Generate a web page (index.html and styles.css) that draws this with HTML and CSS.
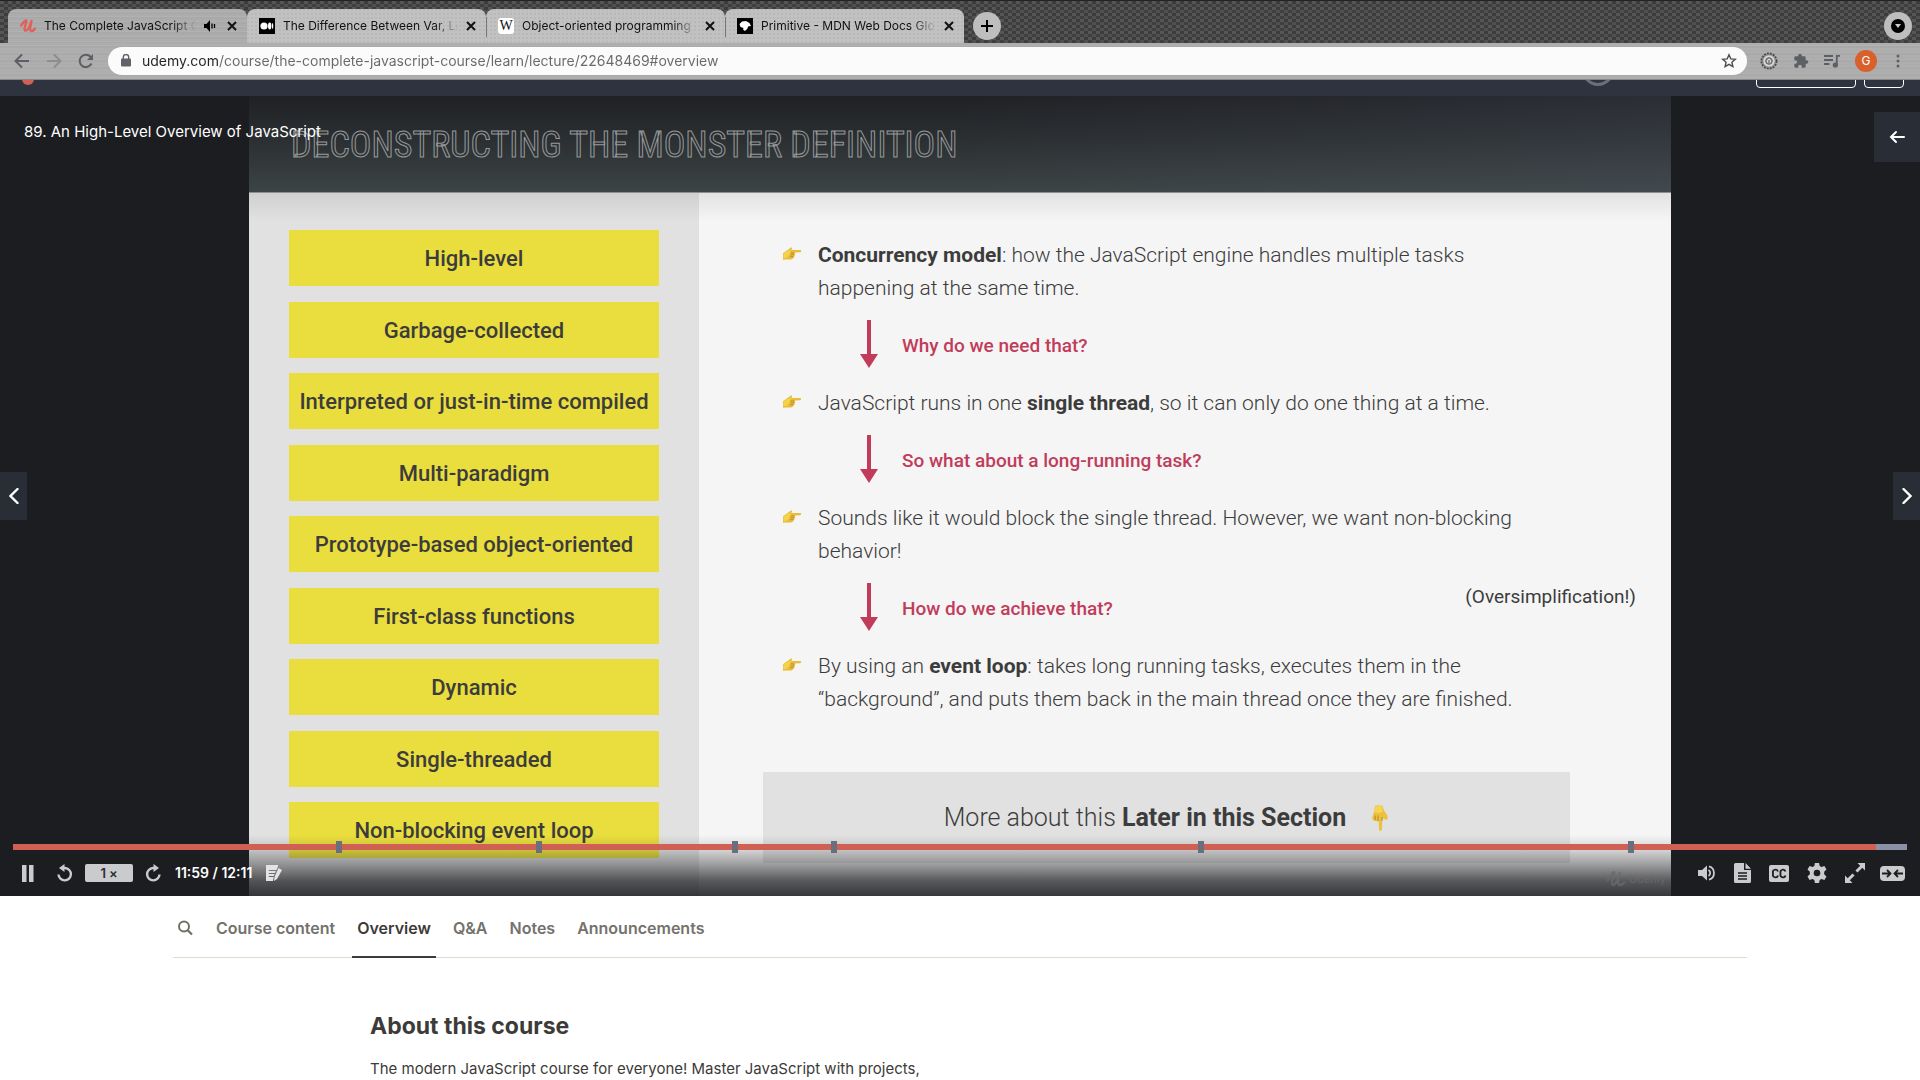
FILE: index.html
```html
<!DOCTYPE html>
<html lang="en">
<head>
<meta charset="utf-8">
<title>The Complete JavaScript Course</title>
<link rel="stylesheet" href="styles.css">
</head>
<body>
<div class="browser">
  <div class="tabstrip">
    <div class="tab tab-active">
      <svg class="favicon" viewBox="0 0 16 16"><path d="M1 7.500C3 5 4.500 2.500 6 2.500c1.500 0-1.500 6-1.500 8.500s2.500 2 4-.5C10 8 11 4.500 11.500 3c-.5 3-2.500 9-.5 10 1.500.5 3-1 4-2.500" fill="none" stroke="#e0615a" stroke-width="2.400" stroke-linecap="round" stroke-linejoin="round"/></svg>
      <span class="tab-title">The Complete JavaScript C</span>
      <svg class="tab-sound" viewBox="0 0 12 12"><path d="M0 4h2.500L6 0v12L2.500 8H0z" fill="#000"/><path d="M8 3.500v5M10.500 4v4" stroke="#000" stroke-width="1.300"/></svg>
      <button class="tab-close" aria-label="Close tab"><svg viewBox="0 0 10 10"><path d="M1 1l8 8M9 1L1 9"/></svg></button>
    </div>
    <div class="tab">
      <svg class="favicon" viewBox="0 0 16 16"><path d="M0 0h16v16H0z"/><circle cx="5" cy="8" r="3.600" fill="#fff"/><ellipse cx="10.700" cy="8" rx="1.700" ry="3.400" fill="#fff"/><ellipse cx="13.600" cy="8" rx=".7" ry="3" fill="#fff"/></svg>
      <span class="tab-title">The Difference Between Var, Le</span>
      <button class="tab-close" aria-label="Close tab"><svg viewBox="0 0 10 10"><path d="M1 1l8 8M9 1L1 9"/></svg></button>
    </div>
    <div class="tab tab-split">
      <span class="favicon favicon-w">W</span>
      <span class="tab-title">Object-oriented programming -</span>
      <button class="tab-close" aria-label="Close tab"><svg viewBox="0 0 10 10"><path d="M1 1l8 8M9 1L1 9"/></svg></button>
    </div>
    <div class="tab tab-split">
      <svg class="favicon" viewBox="0 0 16 16"><path d="M0 0h16v16H0z"/><path d="M2.500 6L5 3.500l4-.5 3.500 2L14 8l-3 .5-.5 2L8 13l-2-1.500.5-1.500-3-1z" fill="#fff"/></svg>
      <span class="tab-title">Primitive - MDN Web Docs Glo</span>
      <button class="tab-close" aria-label="Close tab"><svg viewBox="0 0 10 10"><path d="M1 1l8 8M9 1L1 9"/></svg></button>
    </div>
    <button class="round-btn new-tab" aria-label="New tab"><svg width="14" height="14" viewBox="0 0 14 14"><path d="M7 1v12M1 7h12" stroke="#000" stroke-width="2"/></svg></button>
    <button class="round-btn tab-search" aria-label="Search tabs"><svg width="14" height="14" viewBox="0 0 14 14"><circle cx="7" cy="7" r="7"/><path d="M4 5h6L7 9z" fill="#ccc"/></svg></button>
  </div>
  <div class="toolbar">
    <div class="nav-btns">
      <button aria-label="Back"><svg width="16" height="16" viewBox="0 0 16 16"><path d="M15 8H2M8 1.500L1.500 8 8 14.500" fill="none" stroke="#5c5f63" stroke-width="2"/></svg></button>
      <button aria-label="Forward"><svg width="16" height="16" viewBox="0 0 16 16"><path d="M1 8h13M8 1.500L14.500 8 8 14.500" fill="none" stroke="#8b8d90" stroke-width="2"/></svg></button>
      <button aria-label="Reload"><svg width="16" height="16" viewBox="0 0 16 16"><path d="M13.500 10.500A6.200 6.200 0 1 1 12.500 3.700L14 5.200" fill="none" stroke="#5c5f63" stroke-width="2"/><path d="M15 1v6H9z" fill="#5c5f63"/></svg></button>
    </div>
    <div class="omnibox">
      <svg width="10" height="13" viewBox="0 0 10 13"><rect y="4.500" width="10" height="8" rx="1" fill="#5f6368"/><path d="M2.300 5V3a2.700 2.500 0 0 1 5.400 0v2" fill="none" stroke="#5f6368" stroke-width="1.400"/></svg>
      <input class="url" type="text" aria-label="Address" value="udemy.com/course/the-complete-javascript-course/learn/lecture/22648469#overview">
      <button aria-label="Bookmark"><svg width="16" height="16" viewBox="0 0 16 16"><path d="M8 1.800l1.800 4.100 4.500.4-3.400 2.900 1 4.400L8 11.300l-3.900 2.300 1-4.400L1.700 6.300l4.500-.4z" fill="none" stroke="#4b4e52" stroke-width="1.400"/></svg></button>
    </div>
    <div class="ext-btns">
      <button aria-label="Extension"><svg width="18" height="18" viewBox="0 0 18 18"><circle cx="9" cy="9" r="7.500" fill="none" stroke="#4c4c4c" stroke-width="2" stroke-dasharray="2 1"/><circle cx="9" cy="9" r="6.300" fill="#d4d4d4" stroke="#777"/><circle cx="9" cy="9" r="3.300" fill="#8d8d8d" stroke="#666"/><path d="M7.500 10.500V8.800a1.500 1.500 0 0 1 3 0v1.700" fill="none" stroke="#ddd"/></svg></button>
      <button aria-label="Extensions"><svg width="16" height="16" viewBox="0 0 24 24"><path d="M20.500 11H19V7a2 2 0 0 0-2-2h-4V3.500a2.500 2.500 0 0 0-5 0V5H4a2 2 0 0 0-2 2v3.800h1.500a2.700 2.700 0 0 1 0 5.400H2V20a2 2 0 0 0 2 2h3.800v-1.500a2.700 2.700 0 0 1 5.400 0V22H17a2 2 0 0 0 2-2v-4h1.500a2.500 2.500 0 0 0 0-5z" fill="#5c5f63"/></svg></button>
      <button aria-label="Media"><svg width="16" height="14" viewBox="0 0 16 14"><path d="M0 2h9M0 6h9M0 10h5.500M12.800 12V1.800H16" fill="none" stroke="#5c5f63" stroke-width="1.800"/><circle cx="11.300" cy="11" r="2.600" fill="#5c5f63"/></svg></button>
      <button class="avatar" aria-label="Profile">G</button>
      <button aria-label="Menu"><svg width="4" height="14" viewBox="0 0 4 14" fill="#5c5f63"><circle cx="2" cy="2" r="1.500"/><circle cx="2" cy="7" r="1.500"/><circle cx="2" cy="12" r="1.500"/></svg></button>
    </div>
  </div>
</div>

<header class="course-bar">
  <span class="brand-dot"></span>
  <span class="progress-ring"></span>
  <button class="bar-btn bar-btn-wide" aria-label="Share"></button>
  <button class="bar-btn" aria-label="More options"></button>
</header>

<main>
<section class="player">
  <div class="slide">
    <div class="slide-head"><h2>DECONSTRUCTING THE MONSTER DEFINITION</h2></div>
    <div class="slide-body">
      <ul class="traits">
        <li>High-level</li>
        <li>Garbage-collected</li>
        <li>Interpreted or just-in-time compiled</li>
        <li>Multi-paradigm</li>
        <li>Prototype-based object-oriented</li>
        <li>First-class functions</li>
        <li>Dynamic</li>
        <li>Single-threaded</li>
        <li>Non-blocking event loop</li>
      </ul>
      <div class="explain">
        <svg class="defs" width="0" height="0">
          <symbol id="hand" viewBox="0 0 20 18" preserveAspectRatio="none"><path d="M1 8c1.500-2 4-3.500 6-5.500C8 1 9.500 0 10 1c.4 1-.4 2-.8 3H18c1.600 0 1.600 2.600 0 2.700l-5.500.3c.9.600.9 2 0 2.500.7.900.5 2-.4 2.500.4 1-.1 2-1.100 2.300.1 1-.7 1.700-2 1.700H4c-1.500 0-3 .5-3 .5z" fill="#e9bd3c"/><path d="M1.500 8.500C3 6.500 6 5 8 3.500L9 6c-1 2-2 6-5 8l-2.500.5z" fill="#f3d24c"/><path d="M8.500 7.500l4 .1M8.500 10l3.800-.2M8 12.500l3.500-.2" stroke="#b47f1c" stroke-width=".8"/></symbol>
          <symbol id="down" viewBox="0 0 18 48"><path d="M7 0h4v34h7L9 48 0 34h7z" fill="#c13c5b"/></symbol>
        </svg>
        <div class="point"><svg class="hand"><use href="#hand"/></svg><p><b>Concurrency model</b>: how the JavaScript engine handles multiple tasks<br>happening at the same time.</p></div>
        <div class="why"><svg class="down"><use href="#down"/></svg><p>Why do we need that?</p></div>
        <div class="point"><svg class="hand"><use href="#hand"/></svg><p>JavaScript runs in one <b>single thread</b>, so it can only do one thing at a time.</p></div>
        <div class="why"><svg class="down"><use href="#down"/></svg><p>So what about a long-running task?</p></div>
        <div class="point"><svg class="hand"><use href="#hand"/></svg><p>Sounds like it would block the single thread. However, we want non-blocking<br>behavior!</p></div>
        <div class="why"><svg class="down"><use href="#down"/></svg><p>How do we achieve that?</p><p class="aside">(Oversimplification!)</p></div>
        <div class="point"><svg class="hand"><use href="#hand"/></svg><p>By using an <b>event loop</b>: takes long running tasks, executes them in the<br>“background”, and puts them back in the main thread once they are finished.</p></div>
        <div class="later"><p>More about this <b>Later in this Section</b></p><svg width="18" height="26" viewBox="0 0 18 26"><path d="M4 .8C6 0 9 0 11.500.8c.4 3 1.500 5 4 8.200 1.500 2 1.500 5 .3 5.700-1 .500-2-.1-2.800-1l-1.800-.5-.2 11c-.2 2-2.800 2-3 0l-.3-8.500c-.8 1-2.300 1-2.800 0-.9.600-2.100.2-2.400-.8C1.500 14.500 1 14 1.200 12.500L3 7z" fill="#ecc13f"/><path d="M4.500 1.500c2-1 4.500-.8 6.500-.2l.5 5.700c-2.500 1-5 1-8 0z" fill="#f5d652"/><path d="M4.200 10.500v4.500M7 10.500v5.500M11 12v4" stroke="#b47f1c" stroke-width=".9"/></svg></div>
      </div>
    </div>
  </div>

  <p class="lecture-title">89. An High-Level Overview of JavaScript</p>
  <button class="panel-btn" aria-label="Open course content"><svg width="16" height="14" viewBox="0 0 16 14"><path d="M15 7H2M7 2L2 7l5 5" fill="none" stroke="#fff" stroke-width="2" stroke-linecap="round"/></svg></button>
  <button class="side-btn side-prev" aria-label="Previous"><svg width="10" height="16" viewBox="0 0 10 16"><path d="M8.500 1L1.500 8l7 7" fill="none" stroke="#fff" stroke-width="2.400" stroke-linecap="round"/></svg></button>
  <button class="side-btn side-next" aria-label="Next"><svg width="10" height="16" viewBox="0 0 10 16"><path d="M1.500 1l7 7-7 7" fill="none" stroke="#fff" stroke-width="2.400" stroke-linecap="round"/></svg></button>

  <div class="controls">
    <div class="seek">
      <input type="range" min="0" max="731" value="719" aria-label="Seek">
      <i style="left:17.05%"></i><i style="left:27.61%"></i><i style="left:37.96%"></i><i style="left:43.19%"></i><i style="left:62.57%"></i><i style="left:85.27%"></i>
    </div>
    <div class="buttons">
      <button class="c-pause" aria-label="Pause"><svg width="12" height="17" viewBox="0 0 12 17"><path d="M0 0h4.500v17H0zM7 0h4.500v17H7z"/></svg></button>
      <button class="c-back" aria-label="Rewind 5s"><svg width="16" height="18" viewBox="0 0 16 18"><path d="M5 4h3a6.200 6.200 0 1 1-6.500 6.500" fill="none" stroke="#cacbcd" stroke-width="2.400"/><path d="M7.500 0v8L2 4z"/></svg></button>
      <button class="c-rate">1<small>×</small></button>
      <button class="c-fwd" aria-label="Forward 5s"><svg width="16" height="18" viewBox="0 0 16 18"><path d="M11 4H8a6.200 6.200 0 1 0 6.500 6.500" fill="none" stroke="#cacbcd" stroke-width="2.400"/><path d="M8.500 0v8L14 4z"/></svg></button>
      <span class="c-time">11:59 / 12:11</span>
      <button class="c-note" aria-label="Add note"><svg width="16" height="16" viewBox="0 0 16 16"><path d="M0 0h12v1.500L10.500 5H2.800v1h7L9 8H2.800v1h5.700L8 11H2.800v1h5L7 16H0z" fill="#e3e3e3"/><path d="M12.500 3l3.500 2-5 9-3 2 .5-4z" fill="#e3e3e3"/></svg></button>
      <span class="watermark"><svg width="20" height="18" viewBox="0 0 20 18"><path d="M1 11C4 8 6 2 8 2c2 0-3 8-2 12 2 4 7-5 8-12-1 5-3 11-1 13 2 1 4-1 6-3" fill="none" stroke="#6b6b6e" stroke-width="2"/></svg>Udemy</span>
      <div class="right-group">
      <button aria-label="Volume"><svg width="18" height="18" viewBox="0 0 18 18"><path d="M0 6h4l5-4.500v15L4 12H0z"/><path d="M10.500 6a3.500 3.500 0 0 1 0 6M11 2.300a7 7 0 0 1 0 13.400" fill="none" stroke="#cacbcd" stroke-width="1.800"/></svg></button>
      <button aria-label="Transcript"><svg width="17" height="20" viewBox="0 0 17 20"><path d="M1.500 0H10v7h7v11.500a1.500 1.500 0 0 1-1.500 1.500h-14A1.500 1.500 0 0 1 0 18.500v-17A1.500 1.500 0 0 1 1.500 0zM11.500 0L17 5.700h-5.500z"/><path d="M4 10h9M4 13h9M4 16h9" stroke="#1c1d1f" stroke-width="1.400"/></svg></button>
      <button aria-label="Captions"><svg width="20" height="17" viewBox="0 0 20 17"><rect width="20" height="17" rx="2"/><path d="M9 6.500A2.600 2.600 0 0 0 4 8v1a2.600 2.600 0 0 0 5 1.500M16.500 6.500A2.600 2.600 0 0 0 11.500 8v1a2.600 2.600 0 0 0 5 1.500" fill="none" stroke="#1c1d1f" stroke-width="1.800"/></svg></button>
      <button aria-label="Settings"><svg width="20" height="20" viewBox="0 0 24 24"><path d="M9.500 0h5l.7 3.600 2.200 1.200 3.500-1.200 2.500 4.300-2.800 2.500v3.200l2.800 2.500-2.500 4.300-3.500-1.200-2.200 1.200-.7 3.600h-5l-.7-3.600-2.200-1.200-3.500 1.200L.6 16.100l2.800-2.500v-3.200L.6 7.900l2.500-4.300 3.500 1.200 2.200-1.200zM12 8a4 4 0 1 0 0 8 4 4 0 0 0 0-8z" fill-rule="evenodd"/></svg></button>
      <button aria-label="Fullscreen"><svg width="20" height="20" viewBox="0 0 20 20"><path d="M12.500 0H20v7.500l-2.700-2.700-4.800 4.800-2.100-2.100 4.800-4.800zM0 20v-7.500l2.700 2.700 4.800-4.800 2.100 2.100-4.800 4.800L7.500 20z"/></svg></button>
      <button class="c-theatre" aria-label="Theatre mode"><svg width="25" height="15" viewBox="0 0 25 15"><rect width="25" height="15" rx="4"/><path d="M2 7.500h8M7 4l3.500 3.500L7 11M23 7.500h-8M18 4l-3.500 3.500L18 11" fill="none" stroke="#1c1d1f" stroke-width="1.800"/></svg></button>
      </div>
    </div>
  </div>
</section>

<nav class="tabs">
  <a href="#search" aria-label="Search"><svg width="15" height="16" viewBox="0 0 15 16"><circle cx="6" cy="6.500" r="5" fill="none" stroke="#6f6f66" stroke-width="2"/><path d="M9.500 10l4.500 4.500" stroke="#6f6f66" stroke-width="2.200"/></svg></a>
  <a href="#content">Course content</a>
  <a href="#overview" class="current">Overview</a>
  <a href="#qa">Q&amp;A</a>
  <a href="#notes">Notes</a>
  <a href="#announcements">Announcements</a>
</nav>
<section class="about">
  <h1>About this course</h1>
  <p>The modern JavaScript course for everyone! Master JavaScript with projects,</p>
</section>
</main>
</body>
</html>
```

FILE: styles.css
```css
* { box-sizing: border-box; }
html { overflow: hidden; }
body { margin: 0; background: #fff; color: #3c3b37; font: 16px/20px Inter, "Open Sans", sans-serif; }
h1, h2, p, ul { margin: 0; padding: 0; }
button { border: 0; padding: 0; background: none; display: flex; align-items: center; justify-content: center; font-family: inherit; }
svg { display: block; flex: none; }

/* Browser chrome */
.tabstrip {
  display: flex; align-items: flex-end; height: 43px; padding-left: 8px;
  border-top: 1px solid #222;
  background: conic-gradient(#3c3c3c 25%, #505050 0 50%, #3f3f3f 0 75%, #565656 0) 0 0 / 8px 6px;
}
.tab {
  position: relative; display: flex; align-items: center; flex: 0 1 239px; min-width: 0; height: 34px; padding: 0 10px 0 12px;
  border-radius: 8px 8px 0 0; color: #111; font-size: 12px; line-height: 16px;
  background: radial-gradient(circle at 1px 1px, #b8b8b8 1px, transparent 1px) 0 0 / 4px 4px, #c1c1c1;
}
.tab-active { background: repeating-linear-gradient(#acacac 0 2px, #b1b1b1 2px 3px, #a9a9a9 3px 5px); }
.tab-split::before { content: ""; position: absolute; left: 0; top: 8px; width: 1px; height: 20px; background: #777; }
.favicon { width: 16px; height: 16px; flex: none; }
.favicon-w { border-radius: 3px; background: #fff; font: 14px/16px "Liberation Serif", serif; text-align: center; }
.tab-title {
  flex: 1; min-width: 0; margin: 0 8px; overflow: hidden; white-space: nowrap;
  mask-image: linear-gradient(to left, transparent, #000 24px);
}
.tab-sound { width: 12px; height: 12px; margin-right: 11px; }
.tab-close { width: 10px; height: 10px; }
.tab-close svg { width: 10px; height: 10px; stroke: #111; stroke-width: 2; }
.round-btn { width: 28px; height: 28px; border-radius: 50%; background: #bebebe; margin-bottom: 3px; }
.new-tab { margin-left: 9px; }
.tab-search { margin-left: auto; margin-right: 8px; }
.toolbar {
  display: flex; align-items: center; height: 37px; padding: 0 16px 1px 14px; border-bottom: 1px solid #888;
  background: repeating-linear-gradient(#adadad 0 2px, #b1b1b1 2px 3px, #a9a9a9 3px 5px, #aeaeae 5px 7px);
}
.nav-btns { display: flex; gap: 16px; margin-right: 14px; }
.omnibox { flex: 1; display: flex; align-items: center; height: 28px; padding: 0 10px 0 13px; border-radius: 14px; background: #fbfbfb; }
.url {
  flex: 1; min-width: 0; margin-left: 11px; padding: 0; border: 0; outline: 0; font: 14px/20px Inter, sans-serif;
  color: transparent; background: linear-gradient(to right, #222 76px, #66686b 76px); -webkit-background-clip: text; background-clip: text;
}
.nav-btns button { width: 16px; }
.ext-btns { display: flex; align-items: center; gap: 15px; margin-left: 13px; }
.ext-btns button:last-child { width: 12px; }
.avatar { width: 22px; height: 22px; border-radius: 50%; background: #d95f2b; color: #fff; font-size: 12px; }

/* Course header, mostly scrolled under the browser chrome */
.course-bar { display: flex; align-items: flex-end; height: 16px; padding: 0 16px 8px 17px; background: #2f333f; overflow: hidden; }
.brand-dot { width: 12px; height: 12px; margin: 0 auto 3px 5px; border-radius: 6px; background: #d25f54; flex: none; }
.progress-ring { width: 32px; height: 32px; margin: 0 142px 2px 0; border: 3px solid #6a6f7d; border-radius: 50%; flex: none; }
.bar-btn { width: 40px; height: 36px; margin-left: 8px; border: 1px solid #fff; border-radius: 4px; flex: none; }
.bar-btn-wide { width: 100px; margin-left: 0; }

/* Video */
.player { position: relative; display: flex; justify-content: center; min-height: 800px; background: #1c1d21; overflow: hidden; }
.slide { flex: 0 1 1422px; display: flex; flex-direction: column; font-family: Roboto, sans-serif; color: #3c3c3c; }
.slide-head {
  height: 97px; padding: 26px 42px 0; border-bottom: 1px solid #8e8e90;
  background: linear-gradient(to right, transparent 50%, rgba(88, 96, 112, .2)), linear-gradient(#202125, #2b2f32 45%, #3c4445);
}
.slide-head h2 {
  font: 400 36px/46px "Liberation Sans Narrow", "Roboto Condensed", "DejaVu Sans Condensed", sans-serif;
  white-space: nowrap; color: transparent; -webkit-text-stroke: 1px #96999b;
}
.slide-body { flex: 1; display: grid; grid-template-columns: 450px 1fr; background: linear-gradient(rgba(0, 0, 0, .08), transparent 28px), linear-gradient(to right, #e1e1e1 450px, #f5f5f5 450px); }
.traits { list-style: none; display: flex; flex-direction: column; justify-content: space-between; padding: 37px 40px 38px; }
.traits li { height: 56px; background: #eade3e; text-align: center; font-weight: 500; font-size: 22px; line-height: 58px; white-space: nowrap; }
.explain { padding: 46px 35px 0 83px; white-space: nowrap; }
.defs { position: absolute; }
.point { display: flex; gap: 16px; font-weight: 300; font-size: 21px; line-height: 33px; }
.hand { width: 20px; height: 14px; margin-top: 8px; }
.why { display: flex; align-items: center; margin: 15px 0 19px 78px; color: #c13c5b; font-weight: 500; font-size: 19px; line-height: 28px; }
.why p { padding-top: 3px; }
.down { width: 18px; height: 48px; margin-right: 24px; }
.why .aside { align-self: flex-start; margin-left: auto; padding: 0; color: #3c3c3c; font-weight: 400; }
.later { display: flex; align-items: center; justify-content: center; gap: 25px; height: 91px; margin: 56px 66px 0 -19px; background: #e1e1e1; font-weight: 300; font-size: 25px; line-height: 32px; }
.point b, .later b { font-weight: 700; }
.lecture-title { position: absolute; left: 24px; top: 24px; font-size: 15px; line-height: 24px; color: #fff; }
.panel-btn { position: absolute; right: 0; top: 16px; width: 46px; height: 50px; background: #292d36; }
.side-btn { position: absolute; top: 376px; width: 27px; height: 48px; background: #292d36; }
.side-prev { left: 0; }
.side-next { right: 0; }

/* Player controls */
.controls {
  position: absolute; left: 0; right: 0; bottom: 0; padding: 6px 13px 6px;
  background: linear-gradient(rgba(28, 29, 33, 0), rgba(28, 29, 33, .16) 25%, rgba(28, 29, 33, .4) 48%, rgba(28, 29, 33, .72) 75%, rgba(28, 29, 33, .88));
}
.seek { position: relative; display: flex; height: 12px; align-items: center; }
.seek input { appearance: none; width: 100%; height: 6px; margin: 0; background: linear-gradient(to right, #d05f54 98.36%, #8b90a6 98.36%); }
.seek input::-webkit-slider-thumb { appearance: none; width: 1px; height: 1px; background: transparent; }
.seek i { position: absolute; top: 0; width: 6px; height: 12px; background: #6a6f7d; }
.buttons { display: flex; align-items: center; gap: 18px; height: 37px; padding: 3px 2px 0 9px; }
.buttons svg { fill: #cacbcd; }
.buttons > button { min-width: 16px; }
.buttons .c-pause { width: 12px; min-width: 12px; margin-right: 5px; }
.c-rate { width: 48px; height: 18px; margin: 0 -6px; border-radius: 2px; background: #cacbcd; color: #2d2f31; font-size: 13px; font-weight: 600; gap: 3px; }
.c-rate small { font-size: 13px; }
.c-time { margin: 0 -4px; color: #fff; font-size: 14px; font-weight: 600; white-space: nowrap; }
.watermark { display: flex; align-items: center; gap: 3px; margin: 12px 14px 0 auto; color: #6b6b6e; font-size: 11px; line-height: 14px; opacity: .8; }
.right-group { display: flex; align-items: center; gap: 18px; }
.c-theatre { margin-left: -3px; }

/* Course information */
.tabs { display: flex; gap: 12px; margin: 0 173px; border-bottom: 1px solid #dcdcd0; }
.tabs a { padding: 22px 5px 18px; margin-bottom: -1px; border-bottom: 2px solid transparent; color: #73726c; font-weight: 600; text-decoration: none; white-space: nowrap; }
.tabs a:first-child { padding-top: 24px; padding-right: 6px; }
.tabs .current { color: #3c3b37; border-bottom-color: #3c3b37; }
.about { padding: 52px 370px 0; }
.about h1 { font-size: 23px; line-height: 32px; margin-bottom: 16px; }
.about p { font-size: 15px; line-height: 22px; }
```
